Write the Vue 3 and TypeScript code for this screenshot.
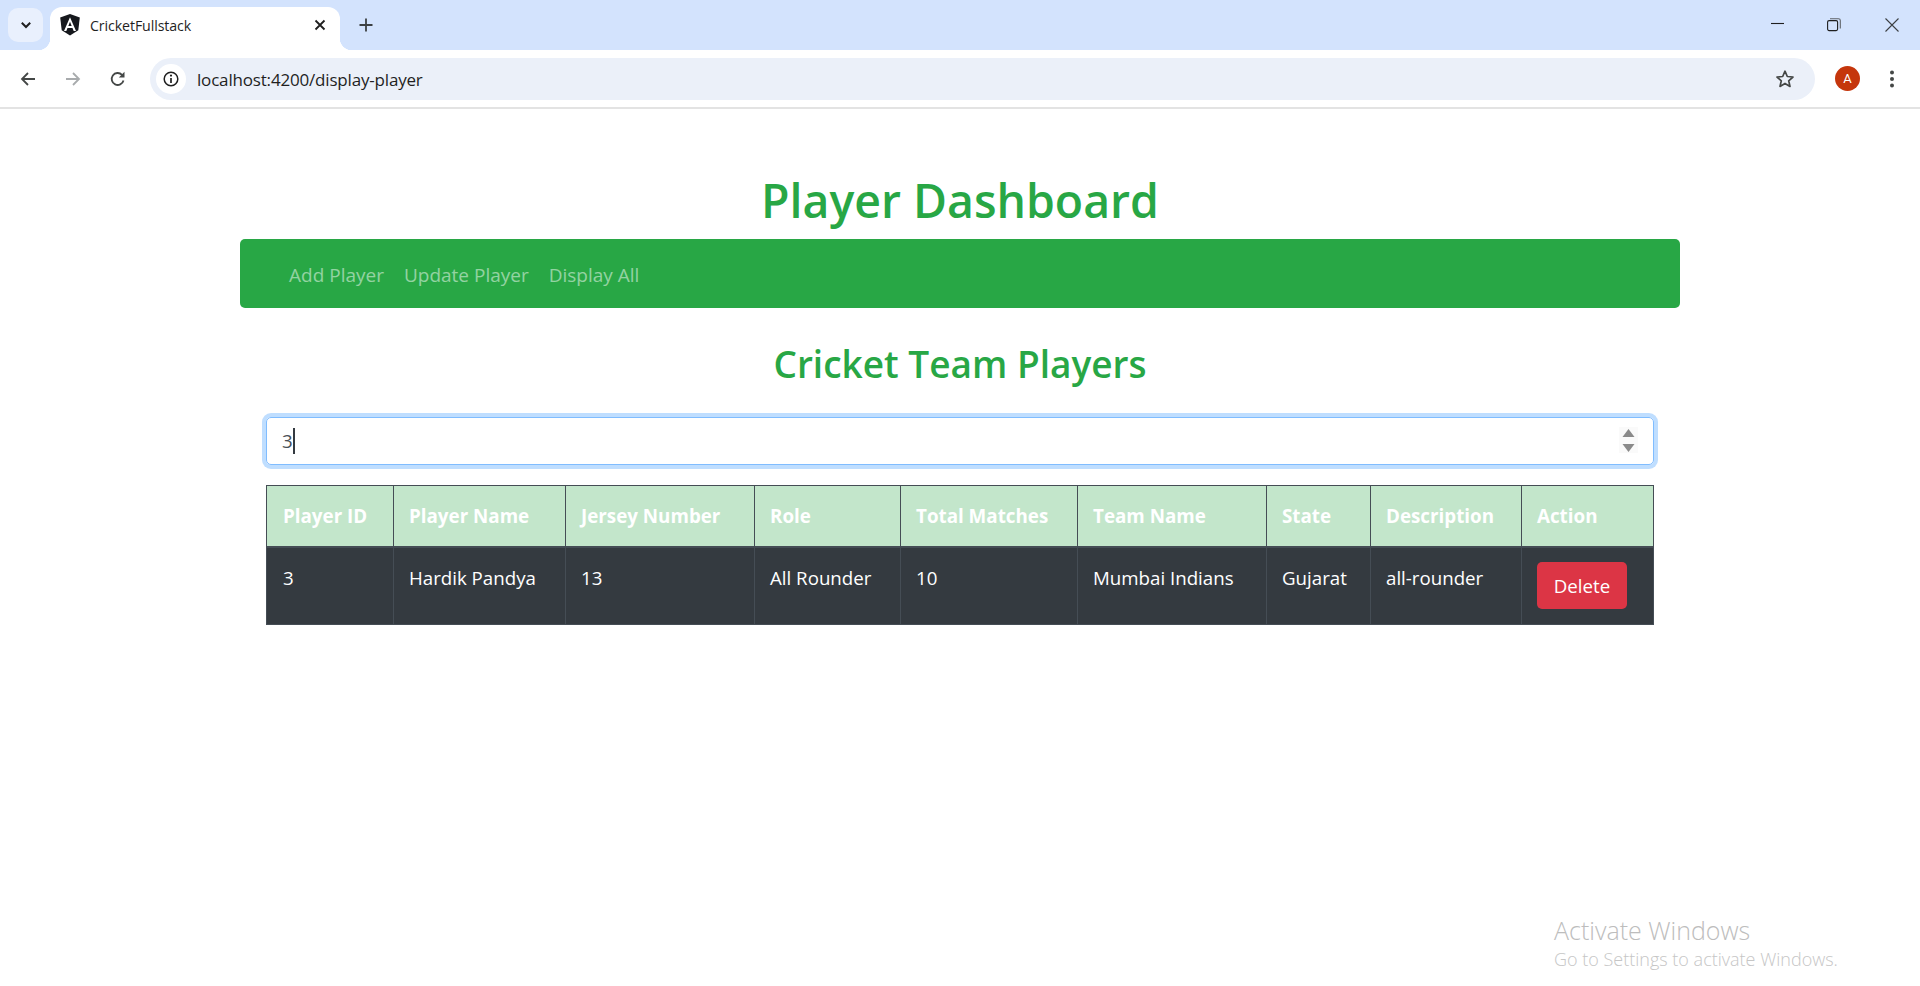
<script setup lang="ts">
interface Player {
  id: number
  name: string
  jersey: number
  role: string
  matches: number
  team: string
  state: string
  description: string
}

const headers: string[] = [
  'Player ID', 'Player Name', 'Jersey Number', 'Role', 'Total Matches',
  'Team Name', 'State', 'Description', 'Action'
]
const players: Player[] = [
  { id: 3, name: 'Hardik Pandya', jersey: 13, role: 'All Rounder', matches: 10, team: 'Mumbai Indians', state: 'Gujarat', description: 'all-rounder' }
]
const navLinks: string[] = ['Add Player', 'Update Player', 'Display All']
</script>

<template>
  <div class="screen">
    <header class="chrome">
      <div class="tabstrip">
        <button class="tab-search" aria-label="Search tabs">
          <svg width="14" height="14" viewBox="0 0 14 14"><path d="M2.8 4.8 7 9l4.2-4.2" fill="none" stroke="#1f1f1f" stroke-width="2"/></svg>
        </button>
        <div class="tab">
          <svg class="favicon" width="20" height="22" viewBox="0 0 20 22">
            <path d="M10 0 .2 3.4l1.5 12.9L10 21.6l8.3-5.3 1.5-12.9z" fill="#16181d"/>
            <path d="M10 3.2 4 17h2.3l1.2-3h5l1.2 3H16zm0 4.6 1.7 4.3H8.300z" fill="#fff"/>
          </svg>
          <span class="tab-title">CricketFullstack</span>
          <svg class="tab-close" width="12" height="12" viewBox="0 0 12 12"><path d="M1.500 1.500l9 9m0-9-9 9" stroke="#1f1f1f" stroke-width="1.800" fill="none"/></svg>
        </div>
        <svg class="new-tab" width="14" height="14" viewBox="0 0 14 14"><path d="M7 .5v13M.5 7h13" stroke="#3c4043" stroke-width="1.800" fill="none"/></svg>
        <div class="win-controls">
          <svg width="14" height="14" viewBox="0 0 14 14"><path d="M0 5.500h13" stroke="#1f1f1f" stroke-width="1.100"/></svg>
          <svg width="14" height="14" viewBox="0 0 14 14"><rect x=".6" y="2.600" width="10" height="10" rx="1.500" fill="none" stroke="#1f1f1f" stroke-width="1.100"/><path d="M3 .7h8.500q1.800 0 1.800 1.800V10.500" fill="none" stroke="#5f6368" stroke-width="1.100"/></svg>
          <svg width="14" height="14" viewBox="0 0 14 14"><path d="M.5.5l13 13m0-13-13 13" stroke="#3c4043" stroke-width="1.100" fill="none"/></svg>
        </div>
      </div>
      <div class="toolbar">
        <svg class="nav-icon" width="16" height="16" viewBox="0 0 16 16"><path d="M15 8H2M8 2 2 8l6 6" fill="none" stroke="#444746" stroke-width="1.800"/></svg>
        <svg class="nav-icon" width="16" height="16" viewBox="0 0 16 16"><path d="M1 8h13M8 2l6 6-6 6" fill="none" stroke="#a8abad" stroke-width="1.800"/></svg>
        <svg class="nav-icon" width="16" height="16" viewBox="0 0 16 16"><path d="M13.500 9.500A6 6 0 1 1 12 3.800" fill="none" stroke="#444746" stroke-width="1.800"/><path d="M14.500 .8v5.700H8.800z" fill="#444746"/></svg>
        <div class="omnibox">
          <span class="site-info">
            <svg width="18" height="18" viewBox="0 0 18 18"><circle cx="9" cy="9" r="6.800" fill="none" stroke="#1f1f1f" stroke-width="1.500"/><path d="M9 8v5" stroke="#1f1f1f" stroke-width="1.700"/><circle cx="9" cy="5.600" r="1.100" fill="#1f1f1f"/></svg>
          </span>
          <span class="url">localhost:4200/display-player</span>
          <svg class="star" width="20" height="20" viewBox="0 0 20 20"><path d="M10 2.200l2.300 5.300 5.700.5-4.300 3.800 1.300 5.600-5-3-5 3 1.300-5.600L2 8l5.700-.5z" fill="none" stroke="#444746" stroke-width="1.700" stroke-linejoin="round"/></svg>
        </div>
        <span class="avatar">A</span>
        <svg class="menu" width="6" height="18" viewBox="0 0 6 18"><circle cx="3" cy="2.500" r="2" fill="#444746"/><circle cx="3" cy="9" r="2" fill="#444746"/><circle cx="3" cy="15.500" r="2" fill="#444746"/></svg>
      </div>
    </header>

    <main class="page">
      <h1 class="title">Player Dashboard</h1>
      <nav class="navbar">
        <a v-for="link in navLinks" :key="link" class="nav-link">{{ link }}</a>
      </nav>
      <section class="content">
        <h2 class="subtitle">Cricket Team Players</h2>
        <div class="search">
          <span class="value">3</span><span class="caret"></span>
          <span class="spinner">
            <svg width="19" height="26" viewBox="0 0 19 26"><path d="M9.500 2l6 8H3.500zM3.500 17h12l-6 8z" fill="#8a8a8a"/></svg>
          </span>
        </div>
        <table class="players">
          <thead>
            <tr><th v-for="h in headers" :key="h">{{ h }}</th></tr>
          </thead>
          <tbody>
            <tr v-for="p in players" :key="p.id">
              <td>{{ p.id }}</td>
              <td>{{ p.name }}</td>
              <td>{{ p.jersey }}</td>
              <td>{{ p.role }}</td>
              <td>{{ p.matches }}</td>
              <td>{{ p.team }}</td>
              <td>{{ p.state }}</td>
              <td>{{ p.description }}</td>
              <td><button class="delete">Delete</button></td>
            </tr>
          </tbody>
        </table>
      </section>
    </main>

    <div class="activate">
      <div class="activate-title">Activate Windows</div>
      <div class="activate-sub">Go to Settings to activate Windows.</div>
    </div>
  </div>
</template>

<style>
html, body { margin: 0; background: #fff; }
</style>

<style scoped>
.screen {
  position: relative;
  width: 1920px;
  height: 986px;
  overflow: hidden;
  background: #fff;
  font-family: "Open Sans", "Noto Sans", sans-serif;
}
.chrome { height: 109px; display: flex; flex-direction: column; }
.tabstrip {
  height: 50px;
  flex: none;
  background: #d3e3fd;
  display: flex;
  align-items: flex-start;
  position: relative;
}
.tab-search {
  width: 35px;
  height: 34px;
  margin: 8px 0 0 8px;
  padding: 0;
  border: 0;
  border-radius: 10px;
  background: #e9f0fd;
  display: flex;
  align-items: center;
  justify-content: center;
}
.tab {
  width: 290px;
  height: 43px;
  margin: 7px 0 0 7px;
  background: #fff;
  border-radius: 12px 12px 0 0;
  display: flex;
  align-items: center;
  box-sizing: border-box;
  padding: 0 14px 7px 10px;
  position: relative;
}
.tab::before, .tab::after {
  content: "";
  position: absolute;
  bottom: 0;
  width: 12px;
  height: 12px;
  background: radial-gradient(circle at 0 0, transparent 12px, #fff 12.5px);
}
.tab::before { left: -12px; }
.tab::after { right: -12px; background: radial-gradient(circle at 100% 0, transparent 12px, #fff 12.5px); }
.favicon { flex: none; margin-right: 10px; }
.tab-title { font-size: 14.200px; color: #1f1f1f; flex: 1; letter-spacing: -.1px; }
.new-tab { margin: 18px 0 0 19px; }
.win-controls {
  position: absolute;
  right: 21px;
  top: 18px;
  display: flex;
  gap: 43px;
}
.win-controls svg:nth-child(2) { margin: 0 1px 0 -1px; }
.toolbar {
  height: 57px;
  flex: none;
  background: #fff;
  border-bottom: 2px solid #e3e3e3;
  border-radius: 12px 12px 0 0;
  display: flex;
  align-items: center;
  padding-left: 20px;
}
.nav-icon { margin-right: 29px; flex: none; }
.nav-icon:nth-child(3) { margin-right: 24px; }
.omnibox {
  width: 1665px;
  height: 42px;
  background: #ebf0f9;
  border-radius: 21px;
  display: flex;
  align-items: center;
  box-sizing: border-box;
  padding: 0 20px 0 6px;
  flex: none;
}
.site-info {
  width: 30px;
  height: 30px;
  background: #fff;
  border-radius: 50%;
  display: flex;
  align-items: center;
  justify-content: center;
  margin-right: 11px;
}
.url { flex: 1; padding-top: 2px; font-size: 17px; color: #1f1f1f; letter-spacing: -.18px; }
.star { flex: none; }
.avatar {
  width: 25px;
  height: 25px;
  margin-left: 20px;
  flex: none;
  background: #c5360c;
  border-radius: 50%;
  color: #fff;
  font-size: 13px;
  display: flex;
  align-items: center;
  justify-content: center;
  font-family: "Roboto", sans-serif;
}
.menu { margin-left: 29px; flex: none; }

.page { width: 1440px; margin: 0 auto; }
.title {
  margin: 0;
  padding-top: 56px;
  height: 74px;
  line-height: 70px;
  text-align: center;
  font-size: 46.400px;
  font-weight: 600;
  color: #28a745;
}
.navbar {
  height: 69px;
  box-sizing: border-box;
  padding: 2px 30px 0 49px;
  background: #28a745;
  border-radius: 5px;
  display: flex;
  align-items: center;
  gap: 20px;
}
.nav-link { font-size: 19px; color: rgba(255, 255, 255, .5); }
.content { padding: 0 26px; }
.subtitle {
  margin: 0;
  padding-top: 33px;
  height: 45px;
  line-height: 46px;
  text-align: center;
  font-size: 37px;
  font-weight: 600;
  color: #28a745;
}
.search {
  margin-top: 31px;
  height: 48px;
  box-sizing: border-box;
  border: 1px solid #80bdff;
  border-radius: 5px;
  box-shadow: 0 0 0 4px rgba(0, 123, 255, .25);
  display: flex;
  align-items: center;
  padding-left: 15px;
  position: relative;
  font-size: 18.700px;
  color: #495057;
}
.value { position: relative; top: -1px; }
.caret { width: 2px; height: 26px; background: #343a40; }
.spinner { position: absolute; right: 15px; top: 9px; height: 26px; background: #fafafa; line-height: 0; }
.players {
  margin-top: 20px;
  width: 1388px;
  table-layout: fixed;
  border-collapse: collapse;
  font-size: 18.700px;
}
.players th {
  height: 61px;
  box-sizing: border-box;
  padding: 0 15px;
  text-align: left;
  background: #c3e6cb;
  color: #fff;
  font-size: 18.800px;
  font-weight: 700;
  border: 1px solid #454d55;
  border-bottom-width: 2px;
  white-space: nowrap;
}
.players td {
  height: 78px;
  box-sizing: border-box;
  padding: 15px 15px 0;
  line-height: 30px;
  vertical-align: top;
  background: #343a40;
  color: #fff;
  border: 1px solid #454d55;
  white-space: nowrap;
}
.players td:last-child { padding-top: 14px; }
.players th:nth-child(1) { width: 127px; padding: 0 0 0 16px; }
.players td:nth-child(1) { padding-left: 16px; }
.players th:nth-child(2) { width: 172px; }
.players th:nth-child(3) { width: 189px; }
.players th:nth-child(4) { width: 146px; }
.players th:nth-child(5) { width: 177px; }
.players th:nth-child(6) { width: 189px; }
.players th:nth-child(7) { width: 104px; }
.players th:nth-child(8) { width: 151px; }
.delete {
  display: block;
  width: 90px;
  height: 47px;
  border: 0;
  padding: 0;
  border-radius: 5px;
  background: #dc3545;
  color: #fff;
  font: inherit;
  line-height: 45px;
}
.activate {
  position: absolute;
  left: 1554px;
  top: 914px;
  color: #bdbdbd;
}
.activate-title { font-size: 25px; line-height: 32px; font-weight: 300; }
.activate-sub { font-size: 18px; line-height: 26px; font-weight: 300; color: #c6c6c6; }
</style>
